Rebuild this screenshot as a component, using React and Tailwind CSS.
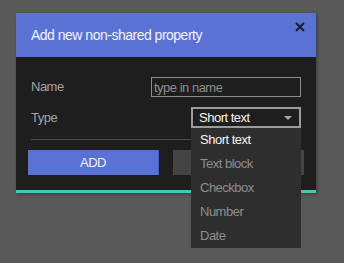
import React from "react";

const types = ["Short text", "Text block", "Checkbox", "Number", "Date"];

const App = () => {
  return (
    <div className="w-[344px] h-[263px] bg-[#595959] pt-[13px] pl-[16px] font-['Liberation_Sans',Arial,sans-serif] tracking-[-0.5px]">
      <div className="relative w-[300px] shadow-[1px_1px_3px_rgba(0,0,0,0.35)]">
        {/* header */}
        <div className="relative h-[44px] bg-[#5a72d4] flex items-center pl-[15px] text-[14px] text-[#f3f5ff]">
          Add new non-shared property
          <button className="absolute top-[9px] right-[11px] w-[10px] h-[10px]">
            <svg width="10" height="10" viewBox="0 0 10 10" className="block">
              <path d="M1 1 L9 9 M9 1 L1 9" stroke="#1b1c30" strokeWidth="1.9" />
            </svg>
          </button>
        </div>

        {/* body */}
        <div className="bg-[#1e1e1e] border-b-[3px] border-[#47c6b3] pt-[20px] pb-[15px] text-[13px]">
          <div className="flex justify-between items-center h-[20px] px-[15px]">
            <span className="text-[#a3a3a3]">Name</span>
            <input
              placeholder="type in name"
              className="w-[150px] h-[20px] border border-[#8c8c8c] bg-transparent pl-[2px] text-[13px] text-white placeholder:text-[#8f8f8f] outline-none"
            />
          </div>

          <div className="flex justify-between items-center h-[21px] mt-[10px] px-[15px]">
            <span className="text-[#a3a3a3]">Type</span>
            <div className="relative w-[110px] h-[21px] border-2 border-[#9c9c9c] flex items-center pl-[6px] text-[#f5f5f5]">
              Short text
              <svg width="8" height="4" viewBox="0 0 8 4" className="ml-auto mr-[7px]">
                <path d="M0 0 L8 0 L4 4 Z" fill="#a8a8a8" />
              </svg>
              {/* open list */}
              <ul className="absolute top-[19px] left-[-2px] w-[110px] bg-[#2e2e2e] z-10">
                {types.map((t, i) => (
                  <li
                    key={t}
                    className={`h-[24px] flex items-center pl-[9px] ${i === 0 ? "text-[#f5f5f5]" : "text-[#8e8e8e]"}`}
                  >
                    {t}
                  </li>
                ))}
              </ul>
            </div>
          </div>

          <div className="mx-[15px] mt-[11px] h-px bg-[#4a4a4a]" />

          <div className="flex gap-[14px] mt-[10px] px-[12px]">
            <button className="w-[131px] h-[25px] bg-[#5a72d4] border-r border-[#4a5db0] text-[#eef0ff]">ADD</button>
            <button className="w-[131px] h-[25px] bg-[#444444]" aria-label="Cancel" />
          </div>
        </div>
      </div>
    </div>
  );
};

export default App;
